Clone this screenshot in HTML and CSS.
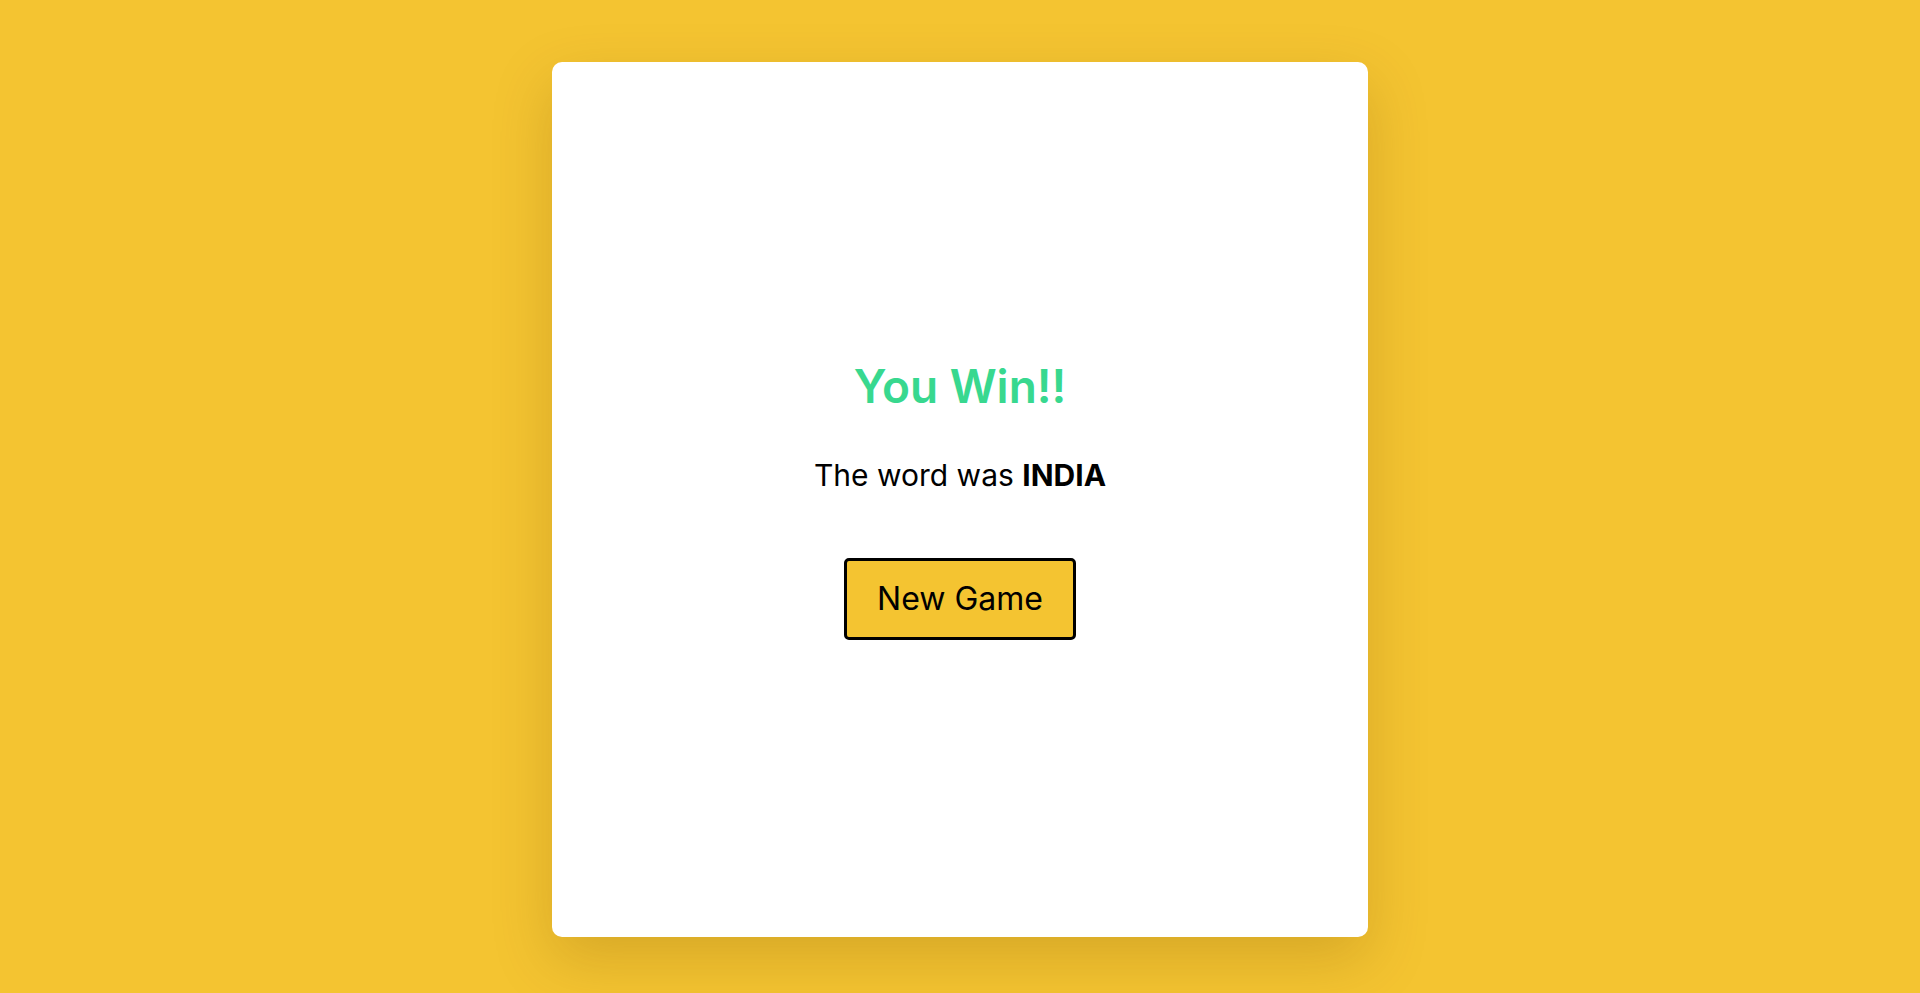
FILE: index.html
```html
<!DOCTYPE html>
<html lang="en">
<head>
<meta charset="utf-8">
<title>Hangman</title>
<link rel="stylesheet" href="styles.css">
</head>
<body>
<div class="page">
  <div class="card">
    <div class="result">
      <h2 class="title">You Win!!</h2>
      <p class="message">The word was <b>INDIA</b></p>
      <button class="new-game">New Game</button>
    </div>
  </div>
</div>
</body>
</html>
```

FILE: styles.css
```css
* { box-sizing: border-box; }
html, body { margin: 0; padding: 0; }
body {
  background: #f4c431;
  font-family: "Inter", "Open Sans", sans-serif;
  height: 100vh;
  overflow: hidden;
}
.page {
  display: flex;
  justify-content: center;
  padding-top: 62px;
}
.card {
  width: 816px;
  height: 875px;
  background: #fff;
  border-radius: 10px;
  box-shadow: 0 22px 60px rgba(110, 70, 0, 0.22);
  display: flex;
  align-items: center;
  justify-content: center;
}
.result {
  display: flex;
  flex-direction: column;
  align-items: center;
}
.title {
  margin: 0;
  font-size: 46px;
  font-weight: 600;
  color: #38d88f;
  line-height: 1.2;
}
.message {
  margin: 42px 0 0;
  font-size: 30px;
  color: #000;
  line-height: 1.2;
}
.message b { font-weight: 700; }
.new-game {
  margin-top: 65px;
  width: 232px;
  height: 82px;
  background: #f4c431;
  border: 3px solid #000;
  border-radius: 5px;
  font-family: inherit;
  font-size: 32px;
  color: #000;
  cursor: pointer;
}
```
